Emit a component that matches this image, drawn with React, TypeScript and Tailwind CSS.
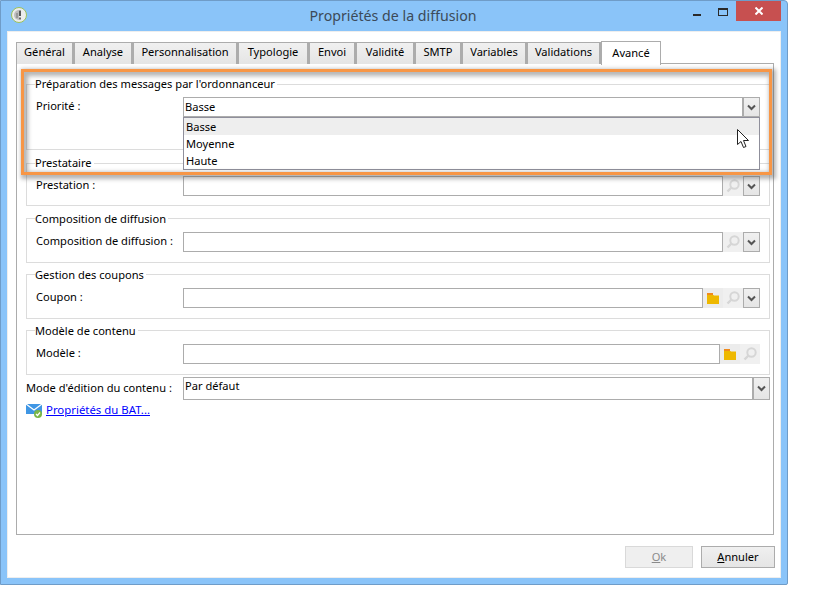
import React from "react";

const tabs = [
  { label: "Général", w: "w-[58px]" },
  { label: "Analyse", w: "w-[59px]" },
  { label: "Personnalisation", w: "w-[105px]" },
  { label: "Typologie", w: "w-[71px]" },
  { label: "Envoi", w: "w-[47px]" },
  { label: "Validité", w: "w-[59px]" },
  { label: "SMTP", w: "w-[47px]" },
  { label: "Variables", w: "w-[65px]" },
  { label: "Validations", w: "w-[74px]" },
];

function Chevron() {
  return (
    <svg width="9" height="7" viewBox="0 0 9 7">
      <path d="M1 1.5 L4.5 5 L8 1.5" fill="none" stroke="#555" strokeWidth="2" />
    </svg>
  );
}

function ChevronButton({ className = "w-[17px]" }: { className?: string }) {
  return (
    <div className={`${className} h-full flex items-center justify-center border border-[#acacac] bg-gradient-to-b from-[#f0f0f0] to-[#e5e5e5]`}>
      <Chevron />
    </div>
  );
}

function SearchButton() {
  return (
    <div className="w-[20px] h-full flex items-center justify-center bg-[#f0f0f0]">
      <svg width="14" height="14" viewBox="0 0 14 14">
        <circle cx="8.5" cy="5.5" r="4.2" fill="none" stroke="#d6d6d6" strokeWidth="2" />
        <path d="M5.5 8.5 L1.5 12.5" stroke="#d6d6d6" strokeWidth="2.4" />
      </svg>
    </div>
  );
}

function FolderButton() {
  return (
    <div className="w-[20px] h-full flex items-center justify-center bg-[#ececec]">
      <svg width="12" height="11" viewBox="0 0 12 11">
        <path d="M0 0 H6 V2 H0 Z" fill="#f08a1d" />
        <path d="M0 2 H6.5 L7 2.5 H12 V11 H0 Z" fill="#eeb800" />
      </svg>
    </div>
  );
}

function Input({ children, value }: { children?: React.ReactNode; value?: string }) {
  return (
    <div className="flex h-[20px] flex-1">
      <div className="flex-1 h-full border border-[#acacac] bg-white pl-[1px] leading-[18px]">{value}</div>
      {children}
    </div>
  );
}

function Group({
  title,
  label,
  box,
  legend = "-top-[8px]",
  labelBox = "pb-[2px]",
  children,
}: {
  title: string;
  label: string;
  box: string;
  legend?: string;
  labelBox?: string;
  children: React.ReactNode;
}) {
  return (
    <div className={`relative border border-[#dcdcdc] pl-[9px] pr-[9px] ${box}`}>
      <span className={`absolute ${legend} left-[8px] bg-white pr-[2px] leading-[16px]`}>{title}</span>
      <div className="flex items-center h-[20px]">
        <span className={`w-[147px] whitespace-nowrap ${labelBox}`}>{label}</span>
        {children}
      </div>
    </div>
  );
}

export default function App() {
  return (
    <div className="relative w-[818px] h-[616px] bg-white text-[11.1px] text-black font-['Noto_Sans',sans-serif] overflow-hidden">
      <div className="w-[788px] h-[585px] flex flex-col border border-[#6f9cc8] rounded-tr-[4px] rounded-br-[2px] bg-[#8ac4f9] px-[6px] pb-[6px]">
        <div className="relative h-[30px] shrink-0 flex items-center justify-center pr-[2px] text-[#3c4a58] text-[14.2px]">
          <svg className="absolute left-[4px] top-[6px]" width="16" height="16" viewBox="0 0 16 16">
            <circle cx="8" cy="8" r="7.5" fill="#ececec" stroke="#9cc25a" />
            <path d="M3 8 A5 5 0 0 1 8 3 V13 A5 5 0 0 1 3 8 Z" fill="#bdbdbd" />
            <path d="M9 3.5 V9" stroke="#333" strokeWidth="1.6" />
            <path d="M9 10.5 V12.5" stroke="#333" strokeWidth="1.4" />
            <path d="M6 6 V11" stroke="#777" strokeWidth="1" />
          </svg>
          Propriétés de la diffusion
          <div className="absolute right-[0px] top-0 flex items-start">
            <div className="w-[19px] h-[21px] flex items-center justify-center mr-[12px]">
              <div className="w-[8px] h-[2px] mt-[6px] bg-[#2a2a2a]" />
            </div>
            <div className="w-[10px] h-[8px] mt-[7px] mr-[8px] border border-[#2a2a2a] border-t-2" />
            <div className="w-[45px] h-[20px] bg-[#c75050] flex items-center justify-center">
              <svg width="8" height="8" viewBox="0 0 8 8">
                <path d="M0.5 0.5 L7.5 7.5 M7.5 0.5 L0.5 7.5" stroke="#fff" strokeWidth="2" />
              </svg>
            </div>
          </div>
        </div>

        <div className="flex-1 flex flex-col bg-white border border-[#eeeeee] pl-[8px] pr-[6px] pt-[9px]">
          <div className="flex items-end h-[23px] shrink-0 relative z-10">
            {tabs.map((t) => (
              <div key={t.label} className={`${t.w} h-[22px] pb-[2px] border border-r-2 border-b-0 border-[#acacac] bg-gradient-to-b from-[#f0f0f0] to-[#e5e5e5] flex items-center justify-center`}>
                {t.label}
              </div>
            ))}
            <div className="w-[60px] h-[24px] pb-[1px] -mb-[1px] border border-b-0 border-[#acacac] bg-white flex items-center justify-center">
              Avancé
            </div>
          </div>

          <div className="h-[472px] border border-[#acacac] -mt-[1px] pl-[9px] pr-[3px] pt-[20px]">
            <Group title="Préparation des messages par l'ordonnanceur" label="Priorité :" box="pt-[12px] h-[66px]" legend="-top-[9px]" labelBox="pb-[1px]">
              <Input value="Basse">
                <ChevronButton />
              </Input>
            </Group>
            <div className="h-[13px]" />
            <Group title="Prestataire" label="Prestation :" box="pt-[12px] h-[43px]" legend="-top-[9px]">
              <Input>
                <SearchButton />
                <ChevronButton />
              </Input>
            </Group>
            <div className="h-[12px]" />
            <Group title="Composition de diffusion" label="Composition de diffusion :" box="pt-[13px] h-[45px]">
              <Input>
                <SearchButton />
                <ChevronButton />
              </Input>
            </Group>
            <div className="h-[11px]" />
            <Group title="Gestion des coupons" label="Coupon :" box="pt-[13px] h-[45px]">
              <Input>
                <FolderButton />
                <SearchButton />
                <ChevronButton />
              </Input>
            </Group>
            <div className="h-[11px]" />
            <Group title="Modèle de contenu" label="Modèle :" box="pt-[13px] h-[45px]">
              <div className="flex h-[20px] flex-1">
                <div className="flex-1 h-full border border-[#acacac] bg-white" />
                <FolderButton />
                <SearchButton />
              </div>
            </Group>
            <div className="flex items-center h-[23px] mt-[2px]">
              <span className="w-[157px] whitespace-nowrap">Mode d'édition du contenu :</span>
              <div className="flex-1 flex h-full">
                <div className="flex-1 h-full border border-[#acacac] pl-[1px] leading-[16px]">Par défaut</div>
                <ChevronButton />
              </div>
            </div>
            <div className="flex items-center gap-[4px] mt-[1px] h-[18px]">
              <svg width="16" height="15" viewBox="0 0 16 15">
                <path d="M0 1 H16 V11 H0 Z" fill="#3f96e4" />
                <path d="M0 1 L8 7 L16 1" fill="none" stroke="#fff" strokeWidth="1.2" />
                <circle cx="12" cy="11" r="4" fill="#7ab648" />
                <path d="M10 11 L11.5 12.5 L14 9.5" fill="none" stroke="#fff" strokeWidth="1.2" />
              </svg>
              <a className="text-[#0000ff] text-[11.4px] underline">Propriétés du BAT...</a>
            </div>
          </div>

          <div className="flex justify-end gap-[8px] mt-[11px] -mr-[1px]">
            <div className="w-[68px] h-[22px] border border-[#d9d9d9] bg-[#efefef] flex items-center justify-center text-[#8a8a8a]">
              <span><span className="underline">O</span>k</span>
            </div>
            <div className="w-[74px] h-[22px] border border-[#acacac] bg-gradient-to-b from-[#f0f0f0] to-[#e5e5e5] flex items-center justify-center">
              <span><span className="underline">A</span>nnuler</span>
            </div>
          </div>
        </div>
      </div>

      {/* open dropdown list */}
      <div className="absolute left-[183px] top-[117px] w-[577px] h-[53px] border border-[#8f8f9b] bg-white pl-[2px] z-20">
        <div className="h-[17px] -ml-[2px] pl-[2px] bg-[#eeeeee] leading-[17px]">Basse</div>
        <div className="h-[17px] leading-[17px]">Moyenne</div>
        <div className="h-[17px] leading-[17px]">Haute</div>
      </div>

      {/* orange callout */}
      <div className="absolute left-[21px] top-[69px] w-[751px] h-[106px] border-[3px] border-[#f79646] z-30 shadow-[2px_2px_4px_2px_rgba(90,90,90,0.45),inset_2px_2px_4px_2px_rgba(90,90,90,0.45)] pointer-events-none" />

      {/* mouse pointer */}
      <svg className="absolute left-[737px] top-[129px] z-40" width="13" height="20" viewBox="0 0 13 20">
        <path d="M0.5 0.5 V15.5 L4 12.5 L6.5 18.5 L9 17.5 L6.5 11.5 L11.5 11.5 Z" fill="#fff" stroke="#222" strokeWidth="1" />
      </svg>
    </div>
  );
}
